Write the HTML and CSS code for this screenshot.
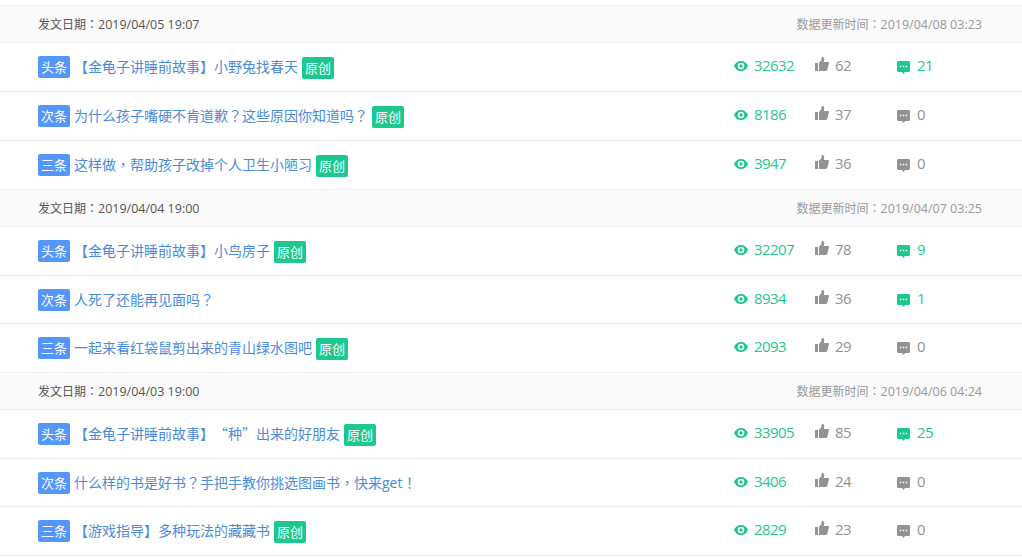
FILE: index.html
```html
<!DOCTYPE html>
<html lang="zh-CN">
<head>
    <meta charset="UTF-8">
    <title>图文列表</title>
    <link rel="stylesheet" href="styles.css">
</head>
<body>
    <svg class="icon-defs" width="0" height="0">
        <symbol id="eye" viewBox="0 0 14 10">
            <path fill-rule="evenodd" d="M7 0C3.800 0 1.200 2 0 5c1.200 3 3.800 5 7 5s5.800-2 7-5c-1.200-3-3.800-5-7-5zm0 8.300A3.300 3.300 0 1 1 7 1.700a3.300 3.300 0 0 1 0 6.600zM7 3.300a1.700 1.700 0 1 0 0 3.400 1.700 1.700 0 0 0 0-3.400z"/>
        </symbol>
        <symbol id="thumb" viewBox="0 0 14 14">
            <path d="M0 6h3v8H0zM4 6l2.500-3V.8C6.500.2 7 0 7.500 0 8.800 0 9.400 1.200 9.200 2.500L8.800 5h4c.8 0 1.300.7 1.100 1.500l-1.600 6.300c-.2.700-.7 1.200-1.400 1.200H4z"/>
        </symbol>
        <symbol id="comment" viewBox="0 0 13 13">
            <path fill-rule="evenodd" d="M1.500 0h10c.8 0 1.500.7 1.500 1.500v8c0 .8-.7 1.500-1.500 1.500H8L6.500 13 5 11H1.500C.7 11 0 10.300 0 9.500v-8C0 .7.700 0 1.500 0zM2.800 4.700v1.600h1.500V4.700zm2.950 0v1.600h1.500V4.700zm2.950 0v1.600h1.500V4.700z"/>
        </symbol>
    </svg>

    <div class="list">
        <div class="group">
            <div class="group-head">
                <span class="send-date">发文日期<span class="p" lang="zh-TW">：</span><span class="time">2019/04/05 19:07</span></span>
                <span class="update-date">数据更新时间<span class="p" lang="zh-TW">：</span><span class="time">2019/04/08 03:23</span></span>
            </div>
            <div class="row">
                <div class="title"><span class="tag">头条</span><a class="link">【金龟子讲睡前故事】小野兔找春天</a><span class="orig">原创</span></div>
                <div class="stats">
                    <span class="stat views"><svg class="ico-eye"><use href="#eye"/></svg>32632</span>
                    <span class="stat likes"><svg class="ico-thumb"><use href="#thumb"/></svg>62</span>
                    <span class="stat comments on"><svg class="ico-comment"><use href="#comment"/></svg>21</span>
                </div>
            </div>
            <div class="row">
                <div class="title"><span class="tag">次条</span><a class="link">为什么孩子嘴硬不肯道歉<span class="p" lang="zh-TW">？</span>这些原因你知道吗<span class="p" lang="zh-TW">？</span></a><span class="orig">原创</span></div>
                <div class="stats">
                    <span class="stat views"><svg class="ico-eye"><use href="#eye"/></svg>8186</span>
                    <span class="stat likes"><svg class="ico-thumb"><use href="#thumb"/></svg>37</span>
                    <span class="stat comments"><svg class="ico-comment"><use href="#comment"/></svg>0</span>
                </div>
            </div>
            <div class="row">
                <div class="title"><span class="tag">三条</span><a class="link">这样做<span class="p" lang="zh-TW">，</span>帮助孩子改掉个人卫生小陋习</a><span class="orig">原创</span></div>
                <div class="stats">
                    <span class="stat views"><svg class="ico-eye"><use href="#eye"/></svg>3947</span>
                    <span class="stat likes"><svg class="ico-thumb"><use href="#thumb"/></svg>36</span>
                    <span class="stat comments"><svg class="ico-comment"><use href="#comment"/></svg>0</span>
                </div>
            </div>
        </div>

        <div class="group">
            <div class="group-head">
                <span class="send-date">发文日期<span class="p" lang="zh-TW">：</span><span class="time">2019/04/04 19:00</span></span>
                <span class="update-date">数据更新时间<span class="p" lang="zh-TW">：</span><span class="time">2019/04/07 03:25</span></span>
            </div>
            <div class="row">
                <div class="title"><span class="tag">头条</span><a class="link">【金龟子讲睡前故事】小鸟房子</a><span class="orig">原创</span></div>
                <div class="stats">
                    <span class="stat views"><svg class="ico-eye"><use href="#eye"/></svg>32207</span>
                    <span class="stat likes"><svg class="ico-thumb"><use href="#thumb"/></svg>78</span>
                    <span class="stat comments on"><svg class="ico-comment"><use href="#comment"/></svg>9</span>
                </div>
            </div>
            <div class="row short">
                <div class="title"><span class="tag">次条</span><a class="link">人死了还能再见面吗<span class="p" lang="zh-TW">？</span></a></div>
                <div class="stats">
                    <span class="stat views"><svg class="ico-eye"><use href="#eye"/></svg>8934</span>
                    <span class="stat likes"><svg class="ico-thumb"><use href="#thumb"/></svg>36</span>
                    <span class="stat comments on"><svg class="ico-comment"><use href="#comment"/></svg>1</span>
                </div>
            </div>
            <div class="row">
                <div class="title"><span class="tag">三条</span><a class="link">一起来看红袋鼠剪出来的青山绿水图吧</a><span class="orig">原创</span></div>
                <div class="stats">
                    <span class="stat views"><svg class="ico-eye"><use href="#eye"/></svg>2093</span>
                    <span class="stat likes"><svg class="ico-thumb"><use href="#thumb"/></svg>29</span>
                    <span class="stat comments"><svg class="ico-comment"><use href="#comment"/></svg>0</span>
                </div>
            </div>
        </div>

        <div class="group">
            <div class="group-head">
                <span class="send-date">发文日期<span class="p" lang="zh-TW">：</span><span class="time">2019/04/03 19:00</span></span>
                <span class="update-date">数据更新时间<span class="p" lang="zh-TW">：</span><span class="time">2019/04/06 04:24</span></span>
            </div>
            <div class="row">
                <div class="title"><span class="tag">头条</span><a class="link">【金龟子讲睡前故事】<span class="q q-open">“</span>种<span class="q">”</span>出来的好朋友</a><span class="orig">原创</span></div>
                <div class="stats">
                    <span class="stat views"><svg class="ico-eye"><use href="#eye"/></svg>33905</span>
                    <span class="stat likes"><svg class="ico-thumb"><use href="#thumb"/></svg>85</span>
                    <span class="stat comments on"><svg class="ico-comment"><use href="#comment"/></svg>25</span>
                </div>
            </div>
            <div class="row short">
                <div class="title"><span class="tag">次条</span><a class="link">什么样的书是好书<span class="p" lang="zh-TW">？</span>手把手教你挑选图画书<span class="p" lang="zh-TW">，</span>快来get<span class="p" lang="zh-TW">！</span></a></div>
                <div class="stats">
                    <span class="stat views"><svg class="ico-eye"><use href="#eye"/></svg>3406</span>
                    <span class="stat likes"><svg class="ico-thumb"><use href="#thumb"/></svg>24</span>
                    <span class="stat comments"><svg class="ico-comment"><use href="#comment"/></svg>0</span>
                </div>
            </div>
            <div class="row">
                <div class="title"><span class="tag">三条</span><a class="link">【游戏指导】多种玩法的藏藏书</a><span class="orig">原创</span></div>
                <div class="stats">
                    <span class="stat views"><svg class="ico-eye"><use href="#eye"/></svg>2829</span>
                    <span class="stat likes"><svg class="ico-thumb"><use href="#thumb"/></svg>23</span>
                    <span class="stat comments"><svg class="ico-comment"><use href="#comment"/></svg>0</span>
                </div>
            </div>
        </div>
    </div>
</body>
</html>
```

FILE: styles.css
```css
html, body {
    height: 558px;
    overflow: hidden;
}
body {
    margin: 0;
    padding-top: 5px;
    background-color: #fff;
    font-family: "Open Sans", "Noto Sans CJK SC", sans-serif;
    font-size: 14px;
}
.icon-defs {
    position: absolute;
}
.list {
    border-top: 1px solid #eee;
}
.p {
    font-family: "Noto Sans CJK TC", sans-serif;
}
.q {
    display: inline-block;
    width: 14px;
    font-family: "Noto Sans CJK SC", sans-serif;
}
.q-open {
    text-align: right;
}
.group-head {
    display: flex;
    justify-content: space-between;
    align-items: center;
    height: 36px;
    padding: 0 40px 0 38px;
    background-color: #fafafa;
    border-bottom: 1px solid #eee;
    font-size: 12px;
}
.time {
    font-size: 12.5px;
}
.send-date {
    color: #555;
}
.update-date {
    color: #999;
}
.row {
    display: flex;
    justify-content: space-between;
    align-items: center;
    height: 48px;
    padding-left: 38px;
    border-bottom: 1px solid #eee;
}
.row.short {
    height: 47px;
}
.title {
    display: flex;
    align-items: center;
}
.tag {
    display: block;
    width: 32px;
    height: 22px;
    line-height: 22px;
    text-align: center;
    font-size: 13px;
    color: #fff;
    background-color: #5596fb;
    border-radius: 2px;
}
.link {
    margin: 0 0 2px 4px;
    color: #4a8bdb;
}
.orig {
    display: block;
    width: 32px;
    height: 22px;
    line-height: 22px;
    margin: 2px 0 0 4px;
    text-align: center;
    font-size: 13px;
    color: #fff;
    background-color: #1cc88e;
    border-radius: 2px;
}
.stats {
    display: flex;
    width: 288px;
    padding-bottom: 4px;
    font-size: 15px;
    letter-spacing: -0.58px;
    color: #929292;
}
.stat {
    display: flex;
    align-items: center;
}
.stat svg {
    fill: currentColor;
    flex: none;
}
.views {
    width: 81px;
    color: #1cc88e;
}
.likes {
    width: 81px;
}
.comments.on {
    color: #1cc88e;
}
.ico-eye {
    width: 14px;
    height: 10px;
    margin: 2px 6px 0 0;
}
.ico-thumb {
    width: 14px;
    height: 14px;
    margin: -2px 6px 0 0;
}
.ico-comment {
    width: 13px;
    height: 13px;
    margin: 5px 7px 0 1px;
}
```
